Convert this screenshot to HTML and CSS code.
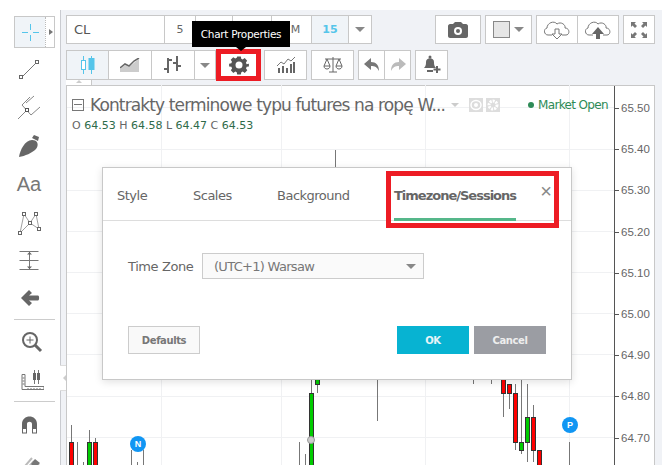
FILE: index.html
```html
<!DOCTYPE html>
<html lang="en">
<head>
<meta charset="utf-8">
<title>Chart Properties</title>
<link rel="stylesheet" href="styles.css">
</head>
<body>
<div class="app">
  <aside class="side">
    <div class="tool active">
      <svg width="30" height="30" viewBox="0 0 30 30"><path d="M15.500 7v6M15.500 18v6M7 15.500h6M18 15.500h6" stroke="#55c5ea" stroke-width="1" fill="none"/></svg>
      <span class="flyout"></span>
    </div>
    <div class="tool"><svg width="30" height="30" viewBox="0 0 30 30"><path d="M8 23L22 9" stroke="#777" fill="none"/><rect x="5.500" y="21.500" width="3" height="3" fill="#fff" stroke="#666"/><rect x="21.500" y="6.500" width="3" height="3" fill="#fff" stroke="#666"/></svg></div>
    <div class="tool tool-a"><svg width="30" height="30" viewBox="0 0 30 30"><path d="M4 27L13 18M8 13L16 5M12 11L20 4M17 23L26 15M8 13L17 23" stroke="#888" fill="none"/><rect x="11.500" y="16.500" width="3" height="3" fill="#fff" stroke="#555"/></svg></div>
    <div class="tool tool-a"><svg width="30" height="30" viewBox="0 0 30 30"><path d="M5 26C6 19 11 9 18 9C24 9 25 14 22 18C18 22 11 25 5 26Z" fill="#666"/><path d="M18 7L20 4L25 6L24 10Z" fill="#666"/></svg></div>
    <div class="tool tool-a"><span class="aa">Aa</span></div>
    <div class="tool"><svg width="30" height="30" viewBox="0 0 30 30"><path d="M10 6L6 25M10 6L16 15L22 6L25 21M6 25L16 15L25 21" stroke="#888" stroke-width=".8" fill="none"/><g fill="#fff" stroke="#666"><rect x="8.500" y="4.500" width="3" height="3"/><rect x="20.500" y="4.500" width="3" height="3"/><rect x="14.500" y="13.500" width="3" height="3"/><rect x="4.500" y="23.500" width="3" height="3"/><rect x="23.500" y="19.500" width="3" height="3"/></g></svg></div>
    <div class="tool"><svg width="30" height="30" viewBox="0 0 30 30"><path d="M5.500 5.500h19M5.500 14.500h19M5.500 23.500h19" stroke="#777" fill="none"/><path d="M15.500 6v17" stroke="#777" fill="none"/><path d="M13 8.500L15.500 6l2.500 2.500zM13 20.500L15.500 23l2.500-2.500z" fill="#666"/></svg></div>
    <div class="tool tool-a"><svg width="30" height="30" viewBox="0 0 30 30"><path d="M7 14L15 6L18 9L15 11.500H24C25.500 11.500 25.500 16.500 24 16.500H15L18 19L15 22Z" fill="#666"/></svg></div>
    <div class="rule"></div>
    <div class="tool tool-b"><svg width="30" height="30" viewBox="0 0 30 30"><circle cx="16" cy="14" r="7" fill="none" stroke="#666" stroke-width="2"/><path d="M12.500 14h7M16 10.500v7" stroke="#666" fill="none"/><path d="M21 19L27 25" stroke="#666" stroke-width="3" fill="none"/></svg></div>
    <div class="tool tool-b"><svg width="30" height="30" viewBox="0 0 30 30"><path d="M8.500 9.500h3v12h19v3h-22z" fill="#fff" stroke="#777" transform="translate(-0.500 0)"/><path d="M8.500 13h2M8.500 16h2M8.500 19h2M14 23v1.500M17 23v1.500M20 23v1.500M23 23v1.500M26 23v1.500" stroke="#777" fill="none"/><path d="M20.500 5v14M24.500 5v14" stroke="#777" fill="none"/><rect x="19" y="8" width="3" height="7" fill="#666"/><rect x="23" y="8" width="3" height="7" fill="#666"/></svg></div>
    <div class="rule"></div>
    <div class="tool tool-b"><svg width="30" height="30" viewBox="0 0 30 30"><path d="M8 25V16C8 6 23 6 23 16V25H18V16C18 13 13 13 13 16V25Z" fill="#666"/><rect x="8.500" y="20.500" width="4" height="4.500" fill="#fff" stroke="#666"/><rect x="18.500" y="20.500" width="4" height="4.500" fill="#fff" stroke="#666"/></svg></div>
    <div class="tool tool-b"><svg width="30" height="30" viewBox="0 0 30 30"><path d="M5 26L18 11M8 27L20 14M12 29L25 17" stroke="#bbb" stroke-width="2" fill="none"/><path d="M17 17L21 12L26 16L21 21Z" fill="#777"/></svg></div>
  </aside>
  <div class="gutter"><span class="grip"></span></div>
  <main class="main">
    <div class="bar bar-top">
      <div class="group">
        <div class="cell symbol">CL</div>
        <div class="cell w32 num">5</div>
        <div class="cell w37"></div>
        <div class="cell w39"></div>
        <div class="cell w40 num"><span class="m">M</span></div>
        <div class="cell w37 num on">15</div>
        <div class="cell w22"><span class="caret"></span></div>
      </div>
      <div class="right">
        <div class="group">
          <div class="cell w46"><svg width="22" height="18" viewBox="0 0 22 18"><path d="M1 5C1 4 2 3 3 3H6L8 1H14L16 3H19C20 3 21 4 21 5V15C21 16 20 17 19 17H3C2 17 1 16 1 15Z" fill="#666"/><circle cx="11" cy="10" r="4" fill="#fff"/><circle cx="11" cy="10" r="2" fill="#666"/></svg></div>
        </div>
        <div class="group">
          <div class="cell w47 swatch-cell"><span class="swatch"></span><span class="caret"></span></div>
        </div>
        <div class="group">
          <div class="cell w41"><svg width="28" height="20" viewBox="0 0 28 20"><path d="M9 15H5C1 15 0 9 4 8C4 3 11 0 14 4C18 1 23 5 22 8C27 8 27 15 23 15H19" fill="none" stroke="#777"/><path d="M12 9H16V14H19L14 19L9 14H12Z" fill="#fff" stroke="#777"/></svg></div>
          <div class="cell w42"><svg width="28" height="20" viewBox="0 0 28 20"><path d="M9 15H5C1 15 0 9 4 8C4 3 11 0 14 4C18 1 23 5 22 8C27 8 27 15 23 15H19" fill="none" stroke="#777"/><path d="M12 19V14H8L14 7L20 14H16V19Z" fill="#666"/></svg></div>
        </div>
        <div class="group">
          <div class="cell w32b"><svg width="20" height="20" viewBox="0 0 20 20"><path d="M2 2h5L5.500 3.500 8 6 6 8 3.500 5.500 2 7zM18 2v5L16.500 5.500 14 8 12 6 14.500 3.500 13 2zM2 18v-5L3.500 14.500 6 12 8 14 5.500 16.500 7 18zM18 18h-5L14.500 16.500 12 14 14 12 16.500 14.500 18 13z" fill="#777"/></svg></div>
        </div>
      </div>
    </div>
    <div class="bar bar-second">
      <div class="group first">
        <div class="cell w42b on"><svg width="20" height="20" viewBox="0 0 20 20"><path d="M5.500 1v18M13.500 1v18" stroke="#55c5ea" fill="none"/><rect x="3.500" y="5.500" width="4" height="9" fill="#fff" stroke="#55c5ea"/><rect x="10.500" y="3" width="6" height="12" fill="#55c5ea"/></svg></div>
        <div class="cell w43"><svg width="20" height="14" viewBox="0 0 20 14"><path d="M0 11L5 7L9 9L15 4L19 1V14H0Z" fill="#ccc"/><path d="M0 10L5 6L9 8L14 3L19 0" fill="none" stroke="#666" stroke-width="1.500"/></svg></div>
        <div class="cell w43"><svg width="20" height="20" viewBox="0 0 20 20"><path d="M5 3v15M14 1v15M1 14h4M5 5h4M10 8h4M14 11h4" stroke="#666" stroke-width="2" fill="none"/></svg></div>
        <div class="cell w20"><span class="caret"></span></div>
      </div>
      <div class="gear-wrap">
        <div class="cell gear"><svg width="20" height="20" viewBox="0 0 20 20"><path d="M8 1h4l.5 2.500 1.600.7 2.200-1.400 2.800 2.800-1.400 2.200.7 1.700L21 9v3l-2.500.5-.7 1.700 1.400 2.200-2.800 2.800-2.200-1.400-1.600.7L12 21H8l-.5-2.500-1.600-.7-2.200 1.400-2.800-2.800 1.400-2.200-.7-1.700L-1 12V9l2.500-.5.700-1.700L.8 4.600 3.600 1.800l2.200 1.400 1.700-.7z" transform="translate(1 .6) scale(.9)" fill="#555"/><circle cx="10" cy="10" r="3.500" fill="#fff"/></svg></div>
      </div>
      <div class="group">
        <div class="cell w41"><svg width="20" height="18" viewBox="0 0 20 18"><path d="M1 10L5 6L8 8L12 3L15 5L19 1" fill="none" stroke="#777"/><path d="M2 12h2v5H2zM6 10h2v7H6zM10 12h2v5h-2zM14 8h2v9h-2zM17 6h2v11h-2z" fill="#666"/></svg></div>
      </div>
      <div class="group">
        <div class="cell w41"><svg width="20" height="18" viewBox="0 0 20 18"><path d="M10 1v15M2 3h16M6 16h8M4 3L1 10M4 3L7 10M16 3L13 10M16 3L19 10" stroke="#666" fill="none"/><path d="M1 10C1 14 7 14 7 10ZM13 10C13 14 19 14 19 10Z" fill="#fff" stroke="#666"/></svg></div>
      </div>
      <div class="group">
        <div class="cell w26"><svg width="16" height="14" viewBox="0 0 16 14"><path d="M0 6L7 0V4C12 4 15 7 15 13C13 9 11 8 7 8V12Z" fill="#777"/></svg></div>
        <div class="cell w25"><svg width="16" height="14" viewBox="0 0 16 14"><path d="M16 6L9 0V4C4 4 1 7 1 13C3 9 5 8 9 8V12Z" fill="#bbb"/></svg></div>
      </div>
      <div class="group">
        <div class="cell w32"><svg width="20" height="20" viewBox="0 0 20 20"><path d="M2 13C4 11 4 9 4 7C4 2 12 2 12 7C12 9 12 11 14 13Z" fill="#666"/><circle cx="8" cy="2" r="1.500" fill="#666"/><path d="M5 16h6" stroke="#666" stroke-width="2"/><path d="M15 11v7M11.500 14.500h7" stroke="#666" stroke-width="2"/></svg></div>
      </div>
    </div>
    <div class="handle"><span class="handle-caret"></span></div>
    <section class="chart">
      <svg class="plot" width="588" height="380" viewBox="66 85 588 380">
        <g stroke="#f0f1f3" fill="none">
          <path d="M67 107.500H614M67 149.500H614M67 190.500H614M67 231.500H614M67 272.500H614M67 313.500H614M67 354.500H614M67 396.500H614M67 437.500H614"/>
          <path d="M161.500 85V465M281.500 85V465M425.500 85V465M569.500 85V465"/>
        </g>
        <g stroke="#777" fill="none">
          <path d="M71.500 425V442M77.500 442V465M83.500 462V465M89.500 430V442M95.500 438V442M131.500 450V465M143.500 450V465M137.500 462V465M299.500 442V465M305.500 454V465M311.500 375V393M317.500 385V393M335.500 150V170M377.500 375V421M473.500 375V384M491.500 375V384M503.500 393V417M509.500 393V409M515.500 384V393M515.500 442V450M521.500 375V442M521.500 450V454M527.500 384V417M527.500 442V462M533.500 405V417M533.500 450V462M569.500 442V465"/>
        </g>
        <g fill="#f00" stroke="#333">
          <rect x="69.500" y="442.500" width="4" height="24"/>
          <rect x="93.500" y="442.500" width="4" height="24"/>
          <rect x="501.500" y="375.500" width="4" height="18"/>
          <rect x="507.500" y="384.500" width="4" height="9"/>
          <rect x="513.500" y="393.500" width="4" height="49"/>
          <rect x="531.500" y="417.500" width="4" height="33"/>
          <rect x="537.500" y="450.500" width="4" height="16"/>
        </g>
        <g fill="#0c0" stroke="#333">
          <rect x="87.500" y="442.500" width="4" height="24"/>
          <rect x="309.500" y="393.500" width="4" height="73"/>
          <rect x="315.500" y="375.500" width="4" height="9"/>
          <rect x="519.500" y="442.500" width="4" height="8"/>
          <rect x="525.500" y="417.500" width="4" height="25"/>
        </g>
        <circle cx="311" cy="440" r="3.500" fill="#ccc" stroke="#999"/>
      </svg>
      <div class="legend">
        <div class="title-row">
          <span class="collapse"></span>
          <span class="title">Kontrakty terminowe typu futures na ropę W...</span>
          <span class="caret caret-light"></span>
          <span class="mini"><svg width="14" height="14" viewBox="0 0 14 14"><ellipse cx="7" cy="7" rx="5" ry="4.500" fill="none" stroke="#fff" stroke-width="1.500"/><circle cx="7" cy="7" r="2" fill="#fff"/></svg></span>
          <span class="mini"><svg width="14" height="14" viewBox="0 0 14 14"><circle cx="7" cy="7" r="4" fill="none" stroke="#fff" stroke-width="3" stroke-dasharray="2 1"/></svg></span>
          <span class="status"><span class="dot"></span>Market Open</span>
        </div>
        <div class="ohlc">O <b>64.53</b> H <b>64.58</b> L <b>64.47</b> C <b>64.53</b></div>
      </div>
      <div class="axis">
        <span>65.50</span><span>65.40</span><span>65.30</span><span>65.20</span><span>65.10</span><span>65.00</span><span>64.90</span><span>64.80</span><span>64.70</span>
      </div>
      <span class="pin pin-n">N</span>
      <span class="pin pin-p">P</span>
    </section>
  </main>
</div>
<div class="tip">Chart Properties</div>
<div class="dialog">
  <div class="tabs">
    <span class="tab t1">Style</span>
    <span class="tab t2">Scales</span>
    <span class="tab t3">Background</span>
    <span class="tab t4">Timezone/Sessions</span>
    <span class="close">×</span>
  </div>
  <div class="body">
    <label class="zone">Time Zone</label>
    <div class="select"><span>(UTC+1) Warsaw</span><span class="caret"></span></div>
  </div>
  <div class="foot">
    <button class="btn plain">Defaults</button>
    <div class="actions">
      <button class="btn ok">OK</button>
      <button class="btn cancel">Cancel</button>
    </div>
  </div>
  <div class="mark"></div>
</div>
</body>
</html>
```

FILE: styles.css
```css
* { box-sizing: border-box; }
html, body { margin: 0; padding: 0; }
body {
  width: 662px; height: 465px; overflow: hidden; position: relative;
  background: #fff; color: #666;
  font-family: "DejaVu Sans", sans-serif;
}
.app { display: flex; height: 465px; }

/* left tools */
.side { width: 60px; flex: none; padding: 16px 5px 0 14px; display: flex; flex-direction: column; }
.tool { height: 38px; display: flex; align-items: center; justify-content: center; flex: none; padding-right: 11px; }
.tool-a { height: 38.500px; }
.tool-b { height: 39.500px; }
.tool.active {
  height: 32px; margin-bottom: 2px; position: relative; padding-right: 9px;
  background: #f0f4f8; border: 1px solid #c8c8c8;
}
.flyout { position: absolute; right: 0; top: 0; bottom: 0; width: 9px; background: #fff; border-left: 1px dotted #bbb; }
.flyout::after { content: ""; position: absolute; left: 3px; top: 12px; border: 3px solid transparent; border-left: 4px solid #777; }
.aa { font: 20px "Liberation Sans", sans-serif; color: #777; }
.rule { height: 1px; background: #ccc; flex: none; margin: 1px 0 1px; }

.gutter { width: 6px; flex: none; margin-top: 10px; background: #f0f2f6; border-left: 1px solid #c9cbd0; position: relative; }
.grip { position: absolute; left: -1px; top: 355px; width: 7px; height: 26px; background: #fff; border: 1px solid #ddd; border-left: 0; }
.grip::after { content: ""; position: absolute; left: 0; top: 9px; border: 3px solid transparent; border-right: 3px solid #ccc; }

/* main column */
.main { flex: 1; min-width: 0; margin-top: 10px; background: #f0f2f6; padding: 5px 7px 0 0; display: flex; flex-direction: column; }
.bar { display: flex; flex: none; }
.bar-top { height: 29px; }
.bar-second { height: 30px; margin-top: 6px; }
.right { display: flex; gap: 4px; margin-left: auto; }
.group { display: flex; background: #fff; border: 1px solid #c8c8c8; }
.cell { display: flex; align-items: center; justify-content: center; border-right: 1px solid #c8c8c8; flex: none; height: 100%; font-size: 12px; }
.cell:last-child { border-right: 0; }
.symbol { width: 98px; justify-content: flex-start; padding-left: 7px; font-size: 13px; color: #555; }
.num { font-size: 11px; color: #666; }
.m { margin-left: 8px; }
.on { background: #f0f4f8; color: #55c5ea; font-weight: bold; }
.w20 { width: 20px; } .w22 { width: 22px; } .w25 { width: 25px; } .w26 { width: 26px; }
.w32 { width: 31px; } .w32b { width: 30px; }
.w37 { width: 37px; } .w39 { width: 39px; } .w40 { width: 40px; } .w41 { width: 41px; } .w42 { width: 40px; } .w42b { width: 42px; }
.w43 { width: 43px; } .w46 { width: 44px; } .w47 { width: 45px; }
.bar-second .group { margin-right: 4px; }
.bar-second .group.first { margin-right: 0; }
.swatch-cell { gap: 4px; }
.swatch { width: 17px; height: 17px; background: #e6e6e6; border: 1px solid #888; }
.caret { width: 0; height: 0; border-left: 5px solid transparent; border-right: 5px solid transparent; border-top: 5px solid #888; flex: none; }
.gear-wrap { width: 45px; flex: none; height: 32px; margin-top: -1px; border: 5px solid #ed1c24; background: #fff; margin-right: 3px; }
.cell.gear { width: 100%; border: 0; }

.handle { width: 26px; height: 6px; flex: none; background: #fff; border-right: 1px solid #c8c8c8; position: relative; }
.handle-caret { position: absolute; left: 10px; top: 0; border: 3px solid transparent; border-bottom: 3px solid #ccc; border-top: 0; }

/* chart */
.chart { position: relative; flex: 1; background: #fff; border: 1px solid #c8c8c8; border-bottom: 0; margin-top: -1px; display: flex; }
.plot { position: absolute; left: -1px; top: -1px; }
.legend { position: relative; width: 547px; padding: 9px 5px 0 5px; flex: none; height: 60px; }
.title-row { display: flex; align-items: center; height: 20px; }
.collapse { width: 12px; height: 12px; border: 1px solid #777; position: relative; margin-right: 6px; flex: none; }
.collapse::after { content: ""; position: absolute; left: 1px; right: 1px; top: 4px; height: 1px; background: #777; }
.title { font-size: 17px; color: #666; white-space: nowrap; letter-spacing: -0.870px; }
.caret-light { border-top-color: #ccc; margin: 0 10px 0 6px; border-left-width: 4px; border-right-width: 4px; border-top-width: 4px; }
.mini { width: 14px; height: 14px; background: #ddd; margin-right: 3px; flex: none; display: flex; }
.status { margin-left: auto; margin-right: 1px; color: #2e8b57; font-size: 12px; white-space: nowrap; display: flex; align-items: center; letter-spacing: -0.650px; }
.dot { width: 6px; height: 6px; border-radius: 50%; background: #2e8b57; margin-right: 4px; }
.ohlc { font-size: 11px; margin-top: 4px; letter-spacing: 0; white-space: nowrap; }
.ohlc b { font-weight: normal; color: #2e6b4a; }
.axis { position: relative; flex: 1; border-left: 1px solid #555; padding-top: 14px; display: flex; flex-direction: column; font: 11.500px/41.200px "Liberation Sans", sans-serif; color: #666; }
.axis span { display: block; height: 41.200px; padding-left: 6px; position: relative; line-height: 16px; }
.axis span::before { content: ""; position: absolute; left: 0; top: 8px; width: 4px; height: 1px; background: #555; }
.pin { position: absolute; width: 16px; height: 16px; border-radius: 50%; background: #1196f3; color: #fff; font: bold 9px/16px "Liberation Sans", sans-serif; text-align: center; }
.pin-n { left: 63px; top: 350px; }
.pin-p { left: 495px; top: 331px; }

/* overlays */
.tip { position: absolute; left: 192px; top: 21px; width: 98px; height: 26px; background: #000; color: #fff; font-size: 10.500px; line-height: 26px; text-align: center; letter-spacing: -0.300px; }
.tip::after { content: ""; position: absolute; left: 44px; top: 26px; border: 5px solid transparent; border-top: 4px solid #000; border-bottom: 0; }

.dialog { position: absolute; left: 102px; top: 167px; width: 470px; height: 213px; background: #fff; border: 1px solid #c8c8c8; box-shadow: 0 2px 8px rgba(0,0,0,.12); display: flex; flex-direction: column; }
.tabs { height: 53px; flex: none; border-bottom: 1px solid #ddd; position: relative; display: flex; align-items: center; padding: 3px 14px 0; font-size: 13px; color: #666; }
.tab { white-space: nowrap; letter-spacing: -0.500px; }
.t1 { width: 76px; } .t2 { width: 84px; } .t3 { width: 117px; }
.t4 { font-weight: bold; letter-spacing: -1px; position: relative; }
.t4::after { content: ""; position: absolute; left: 0; right: 0; bottom: -18px; height: 3px; background: #55b78a; }
.close { position: absolute; right: 19px; top: 11px; font: 20px/24px "Liberation Sans", sans-serif; color: #888; }
.body { display: flex; align-items: center; padding: 32px 0 0 25px; font-size: 13px; }
.zone { width: 74px; letter-spacing: -0.400px; white-space: nowrap; }
.select { width: 222px; height: 26px; background: #fafafa; border: 1px solid #ccc; display: flex; align-items: center; justify-content: space-between; padding: 0 7px 0 11px; letter-spacing: -0.700px; color: #777; }
.foot { display: flex; justify-content: space-between; padding: 47px 25px 0; }
.actions { display: flex; gap: 5px; }
.btn { width: 72px; height: 28px; border: 0; padding: 0; font: bold 10px "DejaVu Sans", sans-serif; letter-spacing: -0.400px; }
.plain { background: #f9f9f9; border: 1px solid #ccc; color: #777; }
.ok { background: #07b3d2; color: #e8f4f8; }
.cancel { background: #9b9da3; color: #eee; }

.mark { position: absolute; left: 283px; top: 3px; width: 173px; height: 57px; border: 5px solid #ed1c24; pointer-events: none; }
```
